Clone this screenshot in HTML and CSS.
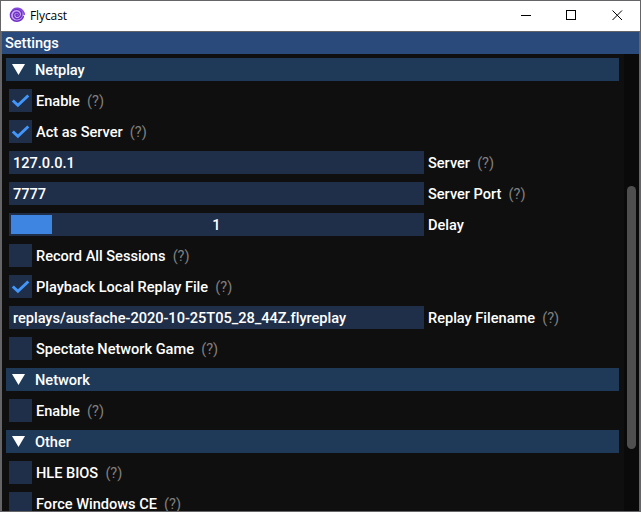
FILE: index.html
```
<!DOCTYPE html>
<html lang="en">
<head>
<meta charset="utf-8">
<title>Flycast</title>
<link rel="stylesheet" href="styles.css">
</head>
<body>
<div class="window">
  <header class="titlebar">
    <svg class="logo" width="16" height="16" viewBox="0 0 16 16" fill="none" stroke-linecap="round">
      <ellipse cx="7.800" cy="7.800" rx="7" ry="6.300" fill="#c9aaf0"/>
      <path d="M8.300 7.400C7.300 6.800 6.400 8.200 7.500 9C9.100 10 10.800 8.200 10 6.500C8.800 4.300 5.200 5 4.600 7.600C4 10.600 7.200 12.600 10 11.400C13.600 9.800 13.600 5 10.600 3.200C7 1.100 2.400 3.200 1.500 7C.8 11 4 14.300 8 14.200C11 14.100 13.400 12.400 14.300 9.800" stroke="#6f2fc8" stroke-width="1.500"/>
      <path d="M4 2.600C7 .5 11.800 1 13.800 4C14.700 5.200 15.200 6.300 15.200 7.500" stroke="#8448dc" stroke-width="1.600"/>
    </svg>
    <span class="app-name">Flycast</span>
    <svg class="controls" width="138" height="30" viewBox="0 0 138 30" fill="none" stroke="#000" shape-rendering="crispEdges">
      <path d="M19 14.500h10M64.500 9.500h9v9h-9z"/>
      <path d="M110.500 9.500l9.500 9.500M120 9.500l-9.500 9.500" shape-rendering="auto"/>
    </svg>
  </header>
  <main class="client">
    <h1 class="caption">Settings</h1>
    <div class="body">
      <div class="list">
        <h2 class="section"><i class="arrow"></i>Netplay</h2>
        <div class="row"><span class="box"><svg class="tick" viewBox="0 0 23 23"><path d="M3.800 11.500L8.900 16.300L19.300 6.500"/></svg></span><span class="label">Enable</span><span class="help">(?)</span></div>
        <div class="row"><span class="box"><svg class="tick" viewBox="0 0 23 23"><path d="M3.800 11.500L8.900 16.300L19.300 6.500"/></svg></span><span class="label">Act as Server</span><span class="help">(?)</span></div>
        <div class="row"><span class="field">127.0.0.1</span><span class="label">Server</span><span class="help">(?)</span></div>
        <div class="row"><span class="field">7777</span><span class="label">Server Port</span><span class="help">(?)</span></div>
        <div class="row"><span class="field slider"><i class="grab"></i><span class="value">1</span></span><span class="label">Delay</span></div>
        <div class="row"><span class="box"></span><span class="label">Record All Sessions</span><span class="help">(?)</span></div>
        <div class="row"><span class="box"><svg class="tick" viewBox="0 0 23 23"><path d="M3.800 11.500L8.900 16.300L19.300 6.500"/></svg></span><span class="label">Playback Local Replay File</span><span class="help">(?)</span></div>
        <div class="row"><span class="field path">replays/ausfache-2020-10-25T05_28_44Z.flyreplay</span><span class="label">Replay Filename</span><span class="help">(?)</span></div>
        <div class="row"><span class="box"></span><span class="label">Spectate Network Game</span><span class="help">(?)</span></div>
        <h2 class="section"><i class="arrow"></i>Network</h2>
        <div class="row"><span class="box"></span><span class="label">Enable</span><span class="help">(?)</span></div>
        <h2 class="section"><i class="arrow"></i>Other</h2>
        <div class="row"><span class="box"></span><span class="label">HLE BIOS</span><span class="help">(?)</span></div>
        <div class="row"><span class="box"></span><span class="label">Force Windows CE</span><span class="help">(?)</span></div>
      </div>
      <div class="scrollbar"><div class="thumb"></div></div>
    </div>
  </main>
</div>
</body>
</html>
```
FILE: styles.css
```
* { box-sizing: border-box; }
body { margin: 0; background: #666; overflow: hidden; }
.window { width: 641px; height: 512px; padding: 1px 1px 0; background: #656467; }
.titlebar {
  display: flex; align-items: center; height: 30px; padding-left: 8px; background: #fff;
  font: 12px/30px "Open Sans", "Noto Sans", sans-serif; color: #000;
}
.logo { margin-bottom: 2px; }
.app-name { margin-left: 5px; letter-spacing: -0.1px; }
.controls { margin-left: auto; }
.client {
  display: flex; flex-direction: column; height: 479px; margin: 1px 1px 0; background: #0f0f0f;
  font: 500 14.6px/25px Roboto, sans-serif; letter-spacing: -0.02px; color: #fff;
}
.caption { flex: none; margin: 0; padding-left: 3px; height: 22px; background: #294a7a; font: inherit; line-height: 23px; }
.body { display: flex; flex: 1; min-height: 0; }
.list { display: flex; flex: 1; flex-direction: column; gap: 8px; padding: 4px 5px 0 4px; overflow: hidden; }
.section {
  display: flex; flex: none; height: 23px; margin: 0; padding-left: 6px;
  background: #1f3a58; font: inherit; width: 613px;
}
.arrow { width: 13px; height: 11px; margin: 6px 10px 0 0; background: #fff; clip-path: polygon(0 0, 100% 0, 50% 100%); }
.row { display: flex; flex: none; height: 23px; padding-left: 3px; white-space: nowrap; }
.box { width: 23px; height: 23px; background: #1f2f4a; }
.tick { display: block; fill: none; stroke: #4296fa; stroke-width: 2.9; }
.label { margin-left: 4px; }
.help { margin-left: 7.2px; color: #808080; font-weight: 400; }
.field { display: flex; flex: none; width: 415px; height: 23px; padding-left: 4px; background: #1f2f4a; }
.path { letter-spacing: -0.03px; }
.slider { padding: 2px; }
.grab { width: 41px; height: 19px; background: #3d85e0; }
.value { flex: 1; padding-right: 41px; text-align: center; line-height: 21px; }
.scrollbar { flex: none; width: 15px; padding: 132px 3px 0; background: #0a0a0a; }
.thumb { width: 9px; height: 263px; border-radius: 4.5px; background: #4f4f4f; }
```
